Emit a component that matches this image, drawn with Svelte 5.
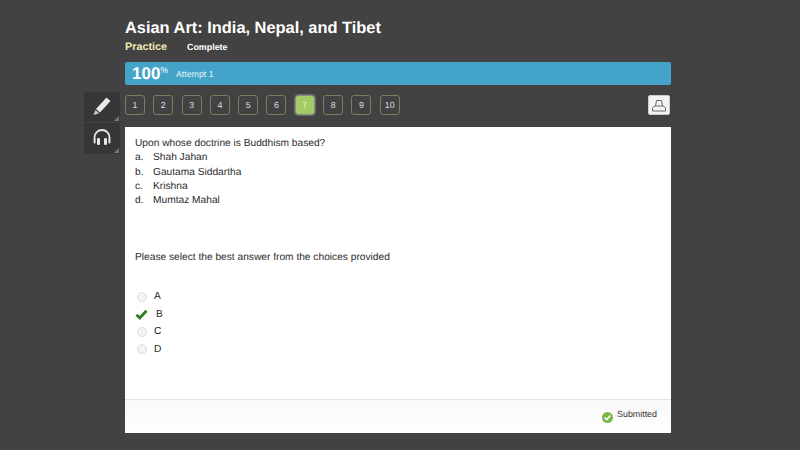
<script lang="ts">
    const pages = [1, 2, 3, 4, 5, 6, 7, 8, 9, 10];
    const current = 7;
    const choices = [
        ["a.", "Shah Jahan"],
        ["b.", "Gautama Siddartha"],
        ["c.", "Krishna"],
        ["d.", "Mumtaz Mahal"],
    ];
    const answers = ["A", "B", "C", "D"];
    const picked = "B";
</script>

<div class="page">
    <aside class="tools">
        <button class="tool" aria-label="Notes">
            <svg width="20" height="20" viewBox="0 0 20 20">
                <path d="M14.5 1.5 18.5 5 8 16.5 4 13Z" fill="#e8e8e8" />
                <path d="M3.4 14 7.2 17.2 1.5 19Z" fill="#c9c9c9" />
            </svg>
        </button>
        <button class="tool tall" aria-label="Listen">
            <svg width="20" height="20" viewBox="0 0 20 20">
                <path d="M2.5 11V9.5a7.5 7.5 0 0 1 15 0V11" fill="none" stroke="#e8e8e8" stroke-width="1.8" />
                <rect x="5" y="10" width="3" height="7" rx="1.2" fill="#e8e8e8" />
                <rect x="12" y="10" width="3" height="7" rx="1.2" fill="#e8e8e8" />
                <rect x="1.6" y="10.5" width="2" height="5" rx="1" fill="#e8e8e8" />
                <rect x="16.4" y="10.5" width="2" height="5" rx="1" fill="#e8e8e8" />
            </svg>
        </button>
    </aside>

    <main>
        <h1>Asian Art: India, Nepal, and Tibet</h1>
        <div class="status">
            <span class="mode">Practice</span>
            <span class="state">Complete</span>
        </div>

        <div class="score">
            <span class="pct">100<sup>%</sup></span>
            <span class="attempt">Attempt 1</span>
        </div>

        <nav>
            {#each pages as p}
                <span class="num" class:active={p === current}>{p}</span>
            {/each}
            <button class="print" aria-label="Print">
                <svg width="16" height="13" viewBox="0 0 16 13">
                    <path d="M4.5 7 5.5 1.5h5l1 5.5" fill="none" stroke="#666" stroke-width="1" />
                    <path d="M3.5 7h9l2 2v3h-13V9Z" fill="none" stroke="#666" stroke-width="1" />
                </svg>
            </button>
        </nav>

        <section class="card">
            <div class="body">
                <p>Upon whose doctrine is Buddhism based?</p>
                {#each choices as [letter, text]}
                    <p class="choice"><span class="letter">{letter}</span>{text}</p>
                {/each}
                <p class="prompt">Please select the best answer from the choices provided</p>
                <ul>
                    {#each answers as a}
                        <li class:picked={a === picked}>
                            {#if a === picked}
                                <svg class="check" width="13" height="11" viewBox="0 0 13 11">
                                    <path d="M1.5 5.8 4.8 9 11.5 1.8" fill="none" stroke="#2f7d22" stroke-width="2.8" />
                                </svg>
                            {:else}
                                <span class="radio"></span>
                            {/if}
                            <span>{a}</span>
                        </li>
                    {/each}
                </ul>
            </div>
            <footer>
                <svg width="11" height="11" viewBox="0 0 11 11">
                    <circle cx="5.5" cy="5.5" r="5.5" fill="#7ab648" />
                    <path d="M2.8 5.6 4.8 7.6 8.3 3.6" fill="none" stroke="#fff" stroke-width="1.5" />
                </svg>
                <span>Submitted</span>
            </footer>
        </section>
    </main>
</div>

<style>
    :global(body) {
        background: #424242;
    }

    .page {
        display: flex;
        height: 450px;
        padding-left: 84px;
        box-sizing: border-box;
        gap: 5px;
        font-family: "Liberation Sans", Arial, sans-serif;
        text-rendering: geometricPrecision;
        color: #2b2b2b;
    }

    .tools {
        width: 36px;
        padding-top: 92px;
        display: flex;
        flex-direction: column;
        gap: 1px;
    }

    .tool {
        width: 36px;
        height: 30px;
        padding: 0 0 2px;
        border: 0;
        background: #363636;
        display: flex;
        align-items: center;
        justify-content: center;
        position: relative;
    }

    .tool.tall {
        height: 31px;
    }

    .tool::after {
        content: "";
        position: absolute;
        right: 1px;
        bottom: 1px;
        border-left: 5px solid transparent;
        border-bottom: 5px solid #777;
    }

    main {
        width: 546px;
        padding-top: 18px;
    }

    h1 {
        margin: 0;
        font-size: 16.4px;
        line-height: 20px;
        font-weight: bold;
        color: #fff;
    }

    .status {
        display: flex;
        align-items: baseline;
        gap: 20px;
        height: 24px;
        line-height: 18px;
    }

    .mode {
        font-size: 10.8px;
        font-weight: bold;
        color: #f3e9b5;
    }

    .state {
        font-size: 8.9px;
        font-weight: bold;
        color: #fff;
    }

    .score {
        height: 23px;
        background: #43a3c9;
        border-radius: 2px;
        display: flex;
        align-items: center;
        padding-left: 7px;
        gap: 8px;
        color: #fff;
    }

    .pct {
        font-size: 17px;
        font-weight: bold;
    }

    sup {
        font-size: 8.5px;
        font-weight: normal;
        vertical-align: 6px;
        line-height: 0;
    }

    .attempt {
        font-size: 8.8px;
        color: #e6f3f8;
    }

    nav {
        display: flex;
        align-items: center;
        gap: 8.3px;
        height: 40px;
        margin-bottom: 2px;
    }

    .num {
        box-sizing: border-box;
        width: 20px;
        height: 20px;
        border: 1px solid #75805c;
        border-radius: 3px;
        background: #424242;
        color: #ddd;
        font-size: 8.8px;
        display: flex;
        align-items: center;
        justify-content: center;
    }

    .num.active {
        background: #a4cb63;
        color: #eef6dd;
        border-color: #888;
        outline: 1px solid #6a6a6a;
    }

    .print {
        margin-left: auto;
        margin-right: 1px;
        box-sizing: border-box;
        width: 22px;
        height: 20px;
        padding: 0;
        border: 1px solid #ccc;
        border-radius: 2px;
        background: #f4f4f4;
        display: flex;
        align-items: center;
        justify-content: center;
    }

    .card {
        height: 306px;
        background: #fff;
        display: flex;
        flex-direction: column;
    }

    .body {
        flex: 1;
        padding: 10px 10px 0;
        font-size: 10.2px;
    }

    p {
        margin: 0;
        line-height: 14.3px;
    }

    .letter {
        display: inline-block;
        width: 18px;
    }

    .prompt {
        margin-top: 43px;
    }

    ul {
        list-style: none;
        margin: 22px 0 0;
        padding: 0;
    }

    li {
        height: 17.6px;
        display: flex;
        align-items: center;
        gap: 7px;
        padding-left: 2px;
    }

    li.picked {
        padding-left: 0;
        gap: 8px;
    }

    .radio {
        box-sizing: border-box;
        width: 10px;
        height: 10px;
        border-radius: 50%;
        border: 1px solid #ddd;
        background: #f4f4f4;
    }

    footer {
        height: 34px;
        box-sizing: border-box;
        border-top: 1px solid #e4e4e4;
        background: linear-gradient(#f8f8f8, #fff);
        display: flex;
        align-items: flex-start;
        justify-content: flex-end;
        gap: 4px;
        padding: 9px 14px 0 0;
        font-size: 8.9px;
        color: #333;
    }

    footer svg {
        margin-top: 3px;
    }
</style>
